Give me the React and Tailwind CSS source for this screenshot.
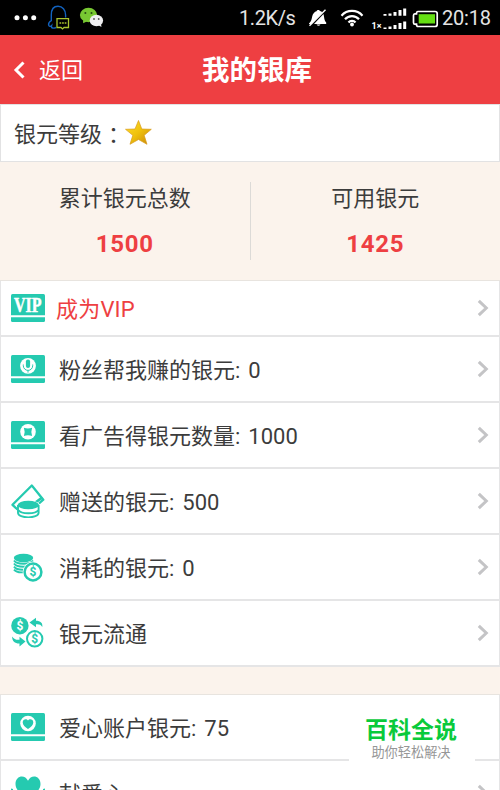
const TEAL = "#25cab0";

// banknote shape, the drawing on its face is passed in
function Note({ children }) {
  return (
    <svg className="w-[34px] h-7" viewBox="0 0 34 28" fill="none">
      <rect width="34" height="28" rx="1.5" fill={TEAL} />
      <path d="M0 22.2h34" stroke="#fff" strokeWidth="2" />
      {children}
    </svg>
  );
}

function VipIcon() {
  return (
    <Note>
      <g fill="#fff" fontFamily="Liberation Serif, serif" fontWeight="bold" fontSize="21">
        <text x="3" y="17.8" textLength="27.5" lengthAdjust="spacingAndGlyphs" stroke="#fff" strokeWidth="0.5">
          VIP
        </text>
      </g>
    </Note>
  );
}

function MicIcon() {
  return (
    <Note>
      <circle cx="17" cy="10.8" r="7.9" fill="#fff" />
      <rect x="14.9" y="4.5" width="4.200" height="8.600" rx="2.100" fill={TEAL} />
      <path d="M12.300 9.500v1.200a4.700 4.700 0 0 0 9.400 0V9.500M17 15.400v2.200" stroke={TEAL} strokeWidth="1" />
    </Note>
  );
}

function CoinNoteIcon() {
  return (
    <Note>
      <circle cx="17" cy="10.8" r="7.8" fill="#fff" />
      <path d="M12.900 6.700q4.100 1.500 8.200 0q-1.500 4.100 0 8.200q-4.100-1.500-8.200 0q1.500-4.100 0-8.200z" fill={TEAL} />
    </Note>
  );
}

function HeartNoteIcon() {
  return (
    <Note>
      <circle cx="17" cy="10.5" r="7.8" fill="#fff" />
      <path d="M17 16c-3-2.2-5.3-4-5.3-6.6C11.7 6 15.600 5.200 17 7.500c1.400-2.300 5.300-1.500 5.300 1.900C22.300 12 20 13.800 17 16z" fill={TEAL} />
    </Note>
  );
}

function GiveIcon() {
  return (
    <svg className="w-[34px] h-[34px]" viewBox="0 0 34 34" fill="none" stroke={TEAL}>
      <path d="M6.500 25.500L1.500 20.800L20.800 1.500L32.300 15.700L28 19.500" strokeWidth="2.300" strokeLinejoin="round" />
      <path d="M24.500 18.500l6.700-5" strokeWidth="2.800" />
      <ellipse cx="17.300" cy="21.300" rx="11.300" ry="5" fill="#fff" stroke="none" />
      <path d="M7 22v6.700c0 6.200 20.600 6.200 20.600 0V22z" fill="#fff" strokeWidth="1.900" />
      <ellipse cx="17.300" cy="21" rx="10.700" ry="4.300" fill={TEAL} stroke="none" />
      <path d="M7.500 26.300c2.500 4 17.200 4 19.800 0" strokeWidth="1.900" />
    </svg>
  );
}

function Dollar({ x, y, color }) {
  return (
    <text
      x={x}
      y={y}
      fill={color}
      textAnchor="middle"
      fontFamily="Roboto, sans-serif"
      fontWeight="bold"
      fontSize="12"
    >
      $
    </text>
  );
}

function SpendIcon() {
  return (
    <svg className="w-[34px] h-[34px]" viewBox="0 0 34 34" fill="none">
      <ellipse cx="12.500" cy="8" rx="9.700" ry="4.200" fill={TEAL} />
      <path
        d="M3 10.600c2.500 4.200 16.500 4.200 19 0M3 13.600c2.500 4.200 16.500 4.200 19 0M3 16.600c2 2.800 6 3.400 11 3M3 19.600c2 2.500 5 3 9 2.700"
        stroke={TEAL}
        strokeWidth="1.900"
      />
      <circle cx="22" cy="22" r="10.400" fill="#fff" />
      <circle cx="22" cy="22" r="8.400" stroke={TEAL} strokeWidth="2.500" />
      <Dollar x="22" y="26.200" color={TEAL} />
    </svg>
  );
}

function FlowIcon() {
  return (
    <svg className="w-[34px] h-[34px]" viewBox="0 0 34 34" fill="none">
      <circle cx="8.900" cy="9.700" r="8.700" fill={TEAL} />
      <Dollar x="8.900" y="14" color="#fff" />
      <circle cx="23.700" cy="22.800" r="7.700" stroke={TEAL} strokeWidth="2" />
      <Dollar x="23.700" y="27" color={TEAL} />
      <path d="M18.500 6.500L25 1.700V4.700C29.500 4.700 32 7 31.300 11C29.800 8.500 28 8 25 8.300V11.200z" fill={TEAL} />
      <path d="M14.500 25.500L8.500 30.600V27.500C4 27.600.9 25 1.200 20.500C3 23.600 5.600 24 8.500 23.700V20.800z" fill={TEAL} />
    </svg>
  );
}

function LoveIcon() {
  return (
    <svg className="w-[34px] h-[34px]" viewBox="0 0 34 34" fill={TEAL}>
      <path d="M17 24C10 18 4.500 14 4.500 8C4.500-.5 14-2 17 4.800C20-2 29.500-.5 29.500 8c0 6-5.500 10-12.500 16z" />
      <path d="M0 12.500l2 .5v8l7 8-2 4-7-8zM34 12.500l-2 .5v8l-7 8 2 4 7-8z" />
    </svg>
  );
}

function Arrow() {
  return (
    <svg className="w-3 h-[18px]" viewBox="0 0 12 18" fill="none">
      <path d="M1.800 1.800L9.300 9L1.800 16.200" stroke="#c4c4c6" strokeWidth="3" />
    </svg>
  );
}

function Row({ icon, label, vip, plain }) {
  return (
    <div
      className={
        vip
          ? "flex items-center h-14 px-2.5 bg-white border-x border-b-2 border-[#e5e5e6] shrink-0"
          : "flex items-center h-[66px] px-2.5 bg-white border-x border-b-2 border-[#e5e5e6] shrink-0"
      }
    >
      <div className="w-[34px] shrink-0">{icon}</div>
      <div
        className={
          vip
            ? "flex-1 pl-[11px] pt-1 tracking-[0.2px] text-[#ee3f42]"
            : "flex-1 pl-3.5 pt-1 [word-spacing:2.5px]"
        }
      >
        {label}
      </div>
      {!plain && <Arrow />}
    </div>
  );
}

function Signal() {
  return (
    <g fill="#fff">
      <path d="M12 14h3v1.800h-3zM17 13.500h3v2.300h-3zM22 12h3v3.800h-3zM27 10h3v5.800h-3zM31.700 8.500h3v7.300h-3z" />
      <path d="M12 27.500h3v1.500h-3zM17 26.500h3v2.500h-3zM22 25h3v4h-3zM27 23h3v6h-3zM31.700 21.500h3v7.500h-3z" />
    </g>
  );
}

function StatusBar() {
  return (
    <div className="flex items-center h-[35px] bg-black text-[#e4e4e4] shrink-0">
      <svg className="w-[104px] h-[35px]" viewBox="0 0 104 35" fill="none">
        <g fill="#fff">
          <circle cx="17" cy="17.800" r="2.500" />
          <circle cx="25.400" cy="17.800" r="2.500" />
          <circle cx="33.700" cy="17.800" r="2.500" />
        </g>
        <path
          d="M56 27.500c-2 1-5.100 1-4.500-1.700c-.8.900-2.700.7-2.900-.8c-.2-1.800.8-3.300 2.700-4.300V15c0-5 2.200-8.700 6.700-8.700s7.600 3.700 7.600 8.700v2.500"
          stroke="#1262be"
          strokeWidth="1.400"
        />
        <path d="M57 18.700h11.500V27.500h-4.500l-1.500 1.400l-1.500-1.400h-4z" stroke="#a9c52f" strokeWidth="1.300" />
        <path d="M59.500 23h1.700M62.100 23h1.700M64.700 23h1.700" stroke="#a9c52f" strokeWidth="1.500" />
        <ellipse cx="88.500" cy="15" rx="8.600" ry="7.200" fill="#78c832" />
        <path d="M83 20l.2 3.200l4-2z" fill="#78c832" />
        <circle cx="85.400" cy="13" r="1" fill="#284c14" />
        <circle cx="91.500" cy="13" r="1" fill="#284c14" />
        <ellipse cx="96.400" cy="20.500" rx="6.700" ry="5.700" fill="#eeeef0" />
        <path d="M98 25l3.500 2-.5-3z" fill="#eeeef0" />
        <circle cx="94" cy="19" r=".9" fill="#555" />
        <circle cx="98.700" cy="19" r=".9" fill="#555" />
      </svg>
      <div className="w-[57px] ml-[135px] pt-px text-[20px] leading-none tracking-[-0.4px] whitespace-nowrap">1.2K/s</div>
      <svg className="w-[146px] h-[35px]" viewBox="296 0 146 35" fill="none">
        <path d="M309 23.500c2.500-2 2.700-5 3.300-7.500c.7-2.500 2.200-4.300 4.200-4.800c.5-1.600 3-1.600 3.500-.1q1.500.4 2.300 1.200L311.500 24H309z" fill="#fff" />
        <path d="M314 24l9.500-10c.8 3.500.7 7 2.700 8.500V24zM316.500 24.500h4q-2 2.500-4 0z" fill="#fff" />
        <path d="M309.500 25.800L325.500 9.800" stroke="#fff" strokeWidth="1.500" />
        <g stroke="#fff" strokeWidth="2.200">
          <path d="M341.500 15.700c5.500-6.300 15.500-6.300 21 0" />
          <path d="M345 19.200c3.700-4.200 10.300-4.200 14 0" />
          <path d="M348.500 22.500c1.700-2.100 5.300-2.100 7 0" />
        </g>
        <circle cx="352" cy="24.500" r="1.900" fill="#fff" />
        <g transform="translate(371.500 0)">
          <Signal />
          <text x="0" y="29" fill="#fff" fontFamily="Roboto, sans-serif" fontWeight="bold" fontSize="9">
            1×
          </text>
        </g>
        <path
          d="M418 11.500h17q2.200 0 2.200 2v11q0 2-2.200 2h-17q-1.500 0-1.500-2.300h-1.800q-1.200 0-1.200-1.700v-7q0-1.700 1.200-1.700h1.800q0-2.300 1.500-2.300z"
          stroke="#fff"
          strokeWidth="1.700"
        />
        <rect x="418.700" y="14.200" width="16.300" height="9.300" fill="#65df13" />
      </svg>
      <div className="pt-px text-[20px] leading-none tracking-[-0.2px]">20:18</div>
    </div>
  );
}

function Total({ label, value }) {
  return (
    <div className="flex-1 flex flex-col items-center">
      <div className="-mt-px h-9 leading-9">{label}</div>
      <div className="mt-[9px] h-9 leading-9 text-[24px] font-bold tracking-[0.7px] text-[#ee3f42]">{value}</div>
    </div>
  );
}

export default function App() {
  return (
    <div className="relative flex flex-col w-[500px] h-[790px] overflow-hidden bg-[#fbf3ec] text-[22px] leading-[32px] text-[#3c3c3c] font-[Roboto,'Noto_Sans_CJK_SC',sans-serif]">
      <StatusBar />
      <div className="grid grid-cols-3 items-center h-[69px] bg-[#ee3f42] text-white shrink-0">
        <div className="flex items-center pl-3">
          <svg className="w-[14px] h-5" viewBox="0 0 14 20" fill="none">
            <path d="M11.500 2.500L4 10L11.500 17.500" stroke="#fff" strokeWidth="3" />
          </svg>
          <span className="pl-[13px] pt-0.5">返回</span>
        </div>
        <div className="pl-3.5 pt-0.5 text-center text-[27.500px] font-bold whitespace-nowrap">我的银库</div>
      </div>
      <div className="flex items-center h-[58px] pl-[13px] bg-white border border-[#e2e2e3] shrink-0">
        <span className="pt-1">
          银元等级<span className="pl-1.5">：</span>
        </span>
        <svg className="w-7 h-7 -ml-1.5" viewBox="0 0 28 28">
          <defs>
            <linearGradient id="gold" x1="0" y1="0" x2="1" y2="1">
              <stop offset="0" stopColor="#ffdf2b" />
              <stop offset=".5" stopColor="#efc10b" />
              <stop offset="1" stopColor="#c8860a" />
            </linearGradient>
          </defs>
          <path
            d="M14.500 1.500L17.800 10L27.300 10.300L20.200 16.300L23 25.300L14.500 20.500L6 25.300L8.800 16.300L1.500 10.300L11 10z"
            fill="url(#gold)"
            stroke="#d99b1c"
            strokeWidth=".7"
          />
        </svg>
      </div>
      <div className="flex items-start h-[119px] pt-5 border-b border-[#e8e4df] shrink-0">
        <Total label="累计银元总数" value="1500" />
        <div className="w-px h-[78px] bg-[#dcdad7]" />
        <Total label="可用银元" value="1425" />
      </div>
      <Row vip icon={<VipIcon />} label="成为VIP" />
      <Row icon={<MicIcon />} label="粉丝帮我赚的银元: 0" />
      <Row icon={<CoinNoteIcon />} label="看广告得银元数量: 1000" />
      <Row icon={<GiveIcon />} label="赠送的银元: 500" />
      <Row icon={<SpendIcon />} label="消耗的银元: 0" />
      <Row icon={<FlowIcon />} label="银元流通" />
      <div className="h-7 border-b border-[#e8e4df] shrink-0" />
      <Row plain icon={<HeartNoteIcon />} label="爱心账户银元: 75" />
      <Row icon={<LoveIcon />} label="献爱心" />
      <div className="absolute left-[349px] top-[704px] w-[126px] h-[86px] pt-[13px] pr-0.5 bg-white text-center">
        <div className="text-[23px] leading-7 font-bold text-[#09ca3b]">百科全说</div>
        <div className="text-[13.200px] leading-4 text-[#969696]">助你轻松解决</div>
      </div>
    </div>
  );
}
